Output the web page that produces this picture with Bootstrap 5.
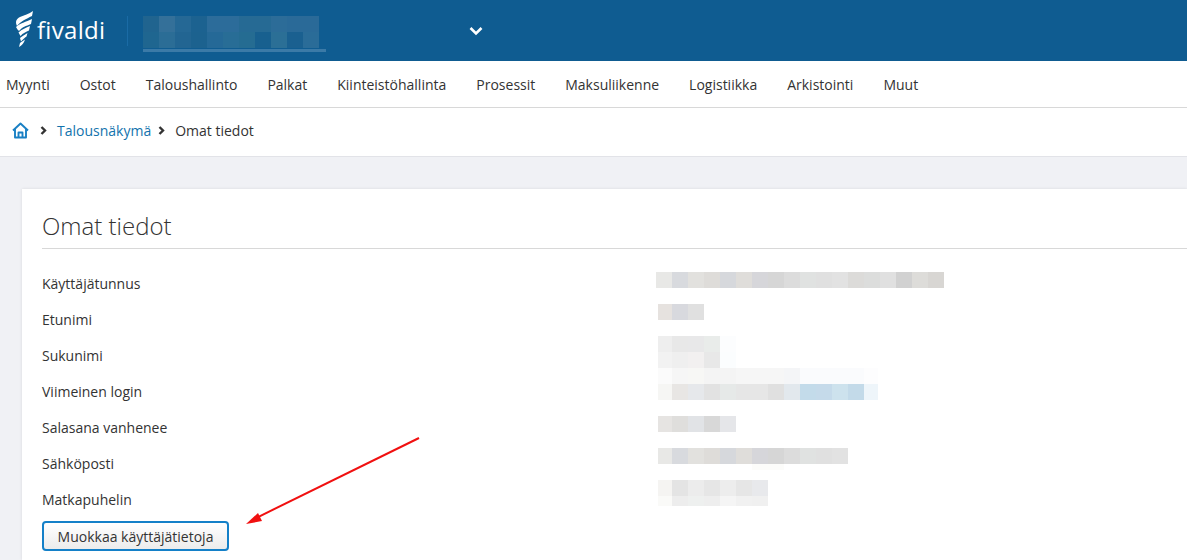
<!DOCTYPE html>
<html lang="fi">
<head>
<meta charset="UTF-8">
<title>Omat tiedot</title>
<link href="https://cdn.jsdelivr.net/npm/bootstrap@5.3.3/dist/css/bootstrap.min.css" rel="stylesheet">
<style>
html, body { height: 560px; overflow: hidden; }
body { font-family: "Open Sans", "Noto Sans", sans-serif; font-size: 14px; color: #333; background: #f0f1f5; position: relative; }
.top-bar { height: 61px; background: #0f5c91; }
.brand-logo { margin: -3px 0 0 15px; }
.brand-name { width: 67px; font-size: 24px; line-height: 1; color: #fff; font-weight: 400; letter-spacing: .3px; margin: -2px 0 0 3px; }
.brand-sep { width: 1px; height: 30px; background: #1a6ba5; margin: 0 15px 0 23px; }
.org-select { width: 183px; border-bottom: 3px solid #3b7aa7; height: 36px; margin-top: 16px; margin-right: 143px; line-height: 0; }
.main-nav { height: 47px; background: #fff; border-bottom: 1px solid #d8d8d8; padding-left: 6px; gap: 30px; }
.main-nav a { color: #333; text-decoration: none; }
.crumbs { height: 49px; background: #fff; border-bottom: 1px solid #e2e3e8; padding: 0 0 3px 12px; }
.crumbs a { color: #1273ad; text-decoration: none; }
.crumb-sep { margin: 0 10px 0 11px; }
.crumb-sep-last { margin: 0 10px 0 7px; }
.content-area { padding: 32px 0 0 22px; }
.info-card { background: #fff; padding: 0 0 9px 20px; box-shadow: 0 0 3px rgba(0, 0, 0, .1); }
.info-title { font-size: 24px; font-weight: 300; line-height: 33px; color: #333; padding: 20px 0 6px; margin: 0; border-bottom: 1px solid #d8d8d8; }
.info-body { padding-top: 17px; }
.info-labels { width: 614px; }
.info-label { height: 36px; line-height: 36px; }
.values-pic { margin-top: 6px; }
.edit-btn { width: 187px; height: 30px; padding: 0; margin-top: 3px; font-size: 14px; color: #333; border: 2px solid #1480c8; border-radius: 4px; background: linear-gradient(#fff, #ececec); }
.note-arrow { position: absolute; left: 240px; top: 430px; }
</style>
</head>
<body>
<header class="top-bar d-flex align-items-center">
  <svg class="brand-logo" width="19" height="36" viewBox="0 0 19 36" fill="#fff" aria-hidden="true">
    <path d="M18 0 L17 5 C11 8 6 10 2 15 C0 11 1 8 5 6 C9 4 14 3 18 0 Z"/>
    <path d="M17 8 L16 13 C11 15 7 16 4 20 C3 19 2 18 1 16 C5 12 11 11 17 8 Z"/>
    <path d="M15 15 L14 19.5 C11 21 8 22 5.5 25 L3.5 21.5 C7 18 11 17 15 15 Z"/>
    <path d="M12.5 22 L11.5 25.5 C9.5 27 8 28 6 30.5 L5 27 C7 25 10 24 12.5 22 Z"/>
    <path d="M10 28.5 L9 31 C8 33 7 34 4 36 L5 32 C6 31 8 30 10 28.5 Z"/>
  </svg>
  <span class="brand-name">fivaldi</span>
  <span class="brand-sep"></span>
  <div class="org-select align-self-start">
    <svg width="176" height="32" viewBox="0 0 176 32" aria-hidden="true">
      <g id="orgCells"></g>
    </svg>
  </div>
  <svg width="14" height="10" viewBox="0 0 14 10" fill="none" stroke="#fff" stroke-width="2.6" aria-hidden="true"><path d="M1.5 2 L7 7.5 L12.5 2"/></svg>
</header>

<nav class="main-nav d-flex align-items-center">
  <a href="#">Myynti</a>
  <a href="#">Ostot</a>
  <a href="#">Taloushallinto</a>
  <a href="#">Palkat</a>
  <a href="#">Kiinteistöhallinta</a>
  <a href="#">Prosessit</a>
  <a href="#">Maksuliikenne</a>
  <a href="#">Logistiikka</a>
  <a href="#">Arkistointi</a>
  <a href="#">Muut</a>
</nav>

<div class="crumbs d-flex align-items-center">
  <svg width="17" height="17" viewBox="0 0 17 17" fill="none" stroke="#1a80c4" stroke-width="1.9" stroke-linejoin="round" aria-hidden="true">
    <path d="M1 8.5 L8.5 1.5 L16 8.5"/>
    <path d="M3 7 V15.5 H14 V7"/>
    <path d="M6.5 15.5 V10.5 H10.5 V15.5"/>
  </svg>
  <svg class="crumb-sep" width="7" height="9" viewBox="0 0 7 9" fill="none" stroke="#333" stroke-width="2.4" aria-hidden="true"><path d="M1.5 1 L5 4.5 L1.5 8"/></svg>
  <a href="#">Talousnäkymä</a>
  <svg class="crumb-sep-last" width="7" height="9" viewBox="0 0 7 9" fill="none" stroke="#333" stroke-width="2.4" aria-hidden="true"><path d="M1.5 1 L5 4.5 L1.5 8"/></svg>
  <span>Omat tiedot</span>
</div>

<main class="content-area">
  <section class="info-card">
    <h1 class="info-title">Omat tiedot</h1>
    <div class="info-body d-flex">
      <div class="info-labels">
        <div class="info-label">Käyttäjätunnus</div>
        <div class="info-label">Etunimi</div>
        <div class="info-label">Sukunimi</div>
        <div class="info-label">Viimeinen login</div>
        <div class="info-label">Salasana vanhenee</div>
        <div class="info-label">Sähköposti</div>
        <div class="info-label">Matkapuhelin</div>
      </div>
      <svg class="values-pic" width="292" height="236" viewBox="0 0 292 236" aria-hidden="true">
        <g id="valueCells"></g>
      </svg>
    </div>
    <button type="button" class="btn edit-btn">Muokkaa käyttäjätietoja</button>
  </section>
</main>

<svg class="note-arrow" width="185" height="100" viewBox="0 0 185 100" aria-hidden="true">
  <path d="M179 8 L14 89" stroke="#f01010" stroke-width="2"/>
  <path d="M6 94 L18 83 L22 91 Z" fill="#f01010"/>
</svg>

<script>
  // blurred-out values, one row of 16px cells at a time
  const NS = 'http://www.w3.org/2000/svg';
  function rowCells(x, y, h, first, last, colours) {
    return colours.map((c, i) => {
      const cx = i === 0 ? first : x + i * 16;
      const w = i === 0 ? x + 16 - first : (i === colours.length - 1 ? last : 16);
      return [cx, y, w, h, c];
    });
  }
  function draw(id, cells) {
    const g = document.getElementById(id);
    cells.forEach(([x, y, w, h, c]) => {
      const r = document.createElementNS(NS, 'rect');
      r.setAttribute('x', x);
      r.setAttribute('y', y);
      r.setAttribute('width', w);
      r.setAttribute('height', h);
      r.setAttribute('fill', c);
      g.appendChild(r);
    });
  }

  draw('valueCells', [
    ...rowCells(0, 0, 16, 0, 16, ['#e8e8e6','#d8dade','#e2e1de','#dedcd9','#d6d8dc','#dfddda','#d6d6da','#d6d6d6','#dcdcdc','#e0e2e1','#e0e0e0','#e2e2e2','#dcdbd9','#dcdddc','#e0e0e0','#d1d1d1','#dddcd9','#d8d6d3']),
    ...rowCells(0, 32, 16, 2, 16, ['#e6e2df','#d8d9de','#e0e0e0']),
    ...rowCells(0, 64, 16, 2, 16, ['#eeeeee','#e8e8e8','#e8e8e9','#e9ecea','#fcfdfe']),
    ...rowCells(0, 80, 16, 2, 16, ['#f2f2f2','#efefef','#f2f0f0','#e8e8e8','#fbfdfe']),
    ...rowCells(0, 96, 16, 2, 14, ['#fbfbfb','#f6f6f6','#f7f7f5','#f4f4f4','#f4f4f4','#f6f6f6','#f6f6f6','#f6f6f6','#f4f5f7','#fafbfd','#fafbfd','#fafbfd','#fafbfd','#fdfdfe']),
    ...rowCells(0, 112, 16, 2, 14, ['#f6f6f4','#e8e6e4','#e6e8eb','#e2e2e2','#e6e9e8','#e6e6e6','#e6e6e6','#e0e0e0','#e2e8ed','#c3dbea','#c5daea','#cde2ed','#c3dae9','#eef5fa']),
    ...rowCells(0, 144, 16, 2, 16, ['#e6e4e2','#dfdedc','#e1e3e6','#d8d8d8','#e5e6e9']),
    ...rowCells(0, 176, 16, 2, 16, ['#e8e8e6','#d8dade','#e2e1de','#dedcd9','#d6d8dc','#dfddda','#d6d6da','#d6d6d6','#dcdcdc','#e0e2e1','#e0e0e0','#e2e2e2']),
    ...rowCells(0, 208, 16, 2, 16, ['#f5f4f2','#e4e4e4','#ececec','#e6e6e6','#ededed','#e6e6e6','#e8e9ec']),
    ...rowCells(0, 224, 10, 2, 16, ['#fafaf8','#ededed','#eef0ef','#eeeeee','#f5f5f5','#f1f1f1','#f0f0f0']),
    [96, 192, 32, 6, '#fcfcfa']
  ]);

  draw('orgCells', [
    ...rowCells(0, 0, 16, 0, 16, ['#20648f','#347099','#256895','#1c6290','#2c6c9a','#2c6c9a','#266a94','#266a94','#2c6c98','#2a6a98','#2a6a98']),
    ...rowCells(0, 16, 16, 0, 16, ['#1f6690','#2b6d96','#226592','#1c628f','#256997','#286d96','#256c92','#18608f','#2b6f96','#1a6090','#2a6c98'])
  ]);
</script>
<script src="https://cdn.jsdelivr.net/npm/bootstrap@5.3.3/dist/js/bootstrap.bundle.min.js"></script>
</body>
</html>
